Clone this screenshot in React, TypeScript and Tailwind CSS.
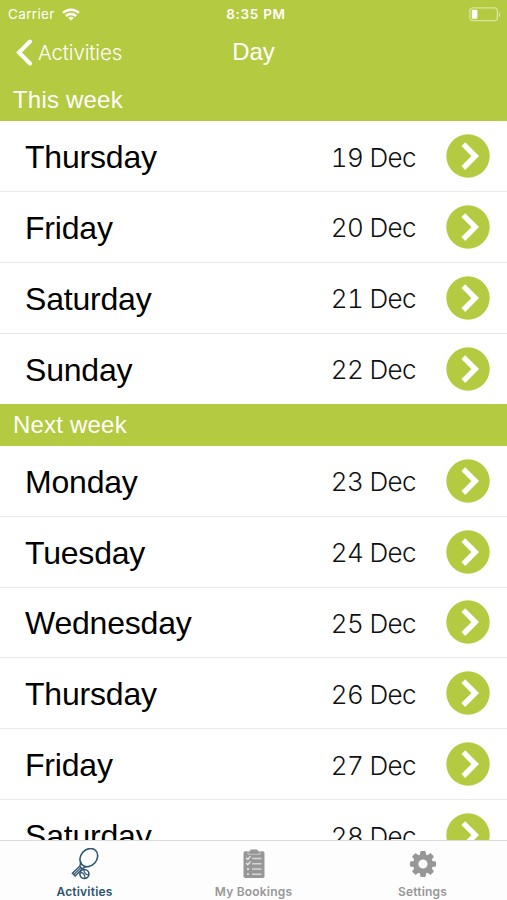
import React, { useState } from 'react'

interface Day {
  name: string
  date: string
}

interface Week {
  title: string
  days: Day[]
}

const weeks: Week[] = [
  {
    title: 'This week',
    days: [
      { name: 'Thursday', date: '19 Dec' },
      { name: 'Friday', date: '20 Dec' },
      { name: 'Saturday', date: '21 Dec' },
      { name: 'Sunday', date: '22 Dec' }
    ]
  },
  {
    title: 'Next week',
    days: [
      { name: 'Monday', date: '23 Dec' },
      { name: 'Tuesday', date: '24 Dec' },
      { name: 'Wednesday', date: '25 Dec' },
      { name: 'Thursday', date: '26 Dec' },
      { name: 'Friday', date: '27 Dec' },
      { name: 'Saturday', date: '28 Dec' }
    ]
  }
]

function WifiIcon() {
  return (
    <svg width="18" height="13" viewBox="0 0 18 13" fill="none" stroke="currentColor" strokeWidth="2.4">
      <path d="M1 4.9C5.5 0.6 12.5 0.6 17 4.9" />
      <path d="M3.9 8C6.8 5.3 11.2 5.3 14.1 8" />
      <path d="M9 12.6L6.2 9.9C7.8 8.5 10.2 8.5 11.8 9.9Z" fill="currentColor" stroke="none" />
    </svg>
  )
}

function BatteryIcon() {
  return (
    <svg width="32" height="15" viewBox="0 0 32 15" fill="none">
      <rect x="0.8" y="0.8" width="27.6" height="12.9" rx="3.2" stroke="white" strokeOpacity="0.5" strokeWidth="1.3" />
      <rect x="2.8" y="2.8" width="5.6" height="9" rx="1" fill="white" />
      <path d="M29.8 5C31.6 5.8 31.6 9.2 29.8 10Z" fill="white" fillOpacity="0.5" />
    </svg>
  )
}

function ArrowCircle() {
  return (
    <svg width="44" height="44" viewBox="0 0 44 44" fill="none">
      <circle cx="22" cy="22" r="21.7" fill="#b4ca40" />
      <path d="M17.3 10.2L29.2 22.1L17.3 34" stroke="white" strokeWidth="5.4" />
    </svg>
  )
}

function RacketIcon() {
  return (
    <svg width="28" height="32" viewBox="0 0 28 32" fill="none" stroke="currentColor">
      <ellipse cx="17.8" cy="9.6" rx="8" ry="9.9" transform="rotate(42 17.8 9.6)" strokeWidth="1.6" />
      <path d="M9.8 13.5L9 18L1.4 25.2L4.2 28L11.4 20.6L15.4 18.4" strokeWidth="1.4" />
      <path d="M8.6 18.2L11.2 20.8M9.8 19.6L3 26.4" strokeWidth="1.3" />
      <circle cx="13.4" cy="26" r="4.5" strokeWidth="1.6" />
      <path d="M9.6 24.6C12.4 24.6 13.8 26.400 14 30M12.8 21.8C13.100 24.800 14.600 26.600 17.600 27" strokeWidth="1.2" />
    </svg>
  )
}

function ClipboardIcon() {
  return (
    <svg width="22" height="30" viewBox="0 0 22 30" fill="none">
      <rect x="0.5" y="2.2" width="21" height="26.8" rx="1.8" fill="currentColor" />
      <path d="M5 2.2V5.2H17V2.2" stroke="#d8d8d8" strokeWidth="0.8" />
      <rect x="7.2" y="0.5" width="7.6" height="4" rx="0.8" fill="currentColor" />
      <path d="M9 9.5H18.5M9 14.7H18.5M9 20H18.5M9 25.2H18.5" stroke="#d6d6d6" strokeWidth="1.4" />
      <path d="M3.2 8.8L4.8 10.5L7.5 7.2M3.2 14L4.8 15.7L7.5 12.4" stroke="#ededed" strokeWidth="1.3" />
      <path d="M4 20H6M4 25.2H6" stroke="#dedede" strokeWidth="1.8" />
    </svg>
  )
}

function GearIcon() {
  const teeth = [0, 45, 90, 135, 180, 225, 270, 315]
  return (
    <svg width="28" height="28" viewBox="0 0 28 28" fill="currentColor">
      {teeth.map((angle) => (
        <path key={angle} d="M11.4 1.6Q11.5 0.9 12.2 0.9H15.8Q16.5 0.9 16.6 1.6L17.5 7H10.5Z" transform={`rotate(${angle} 14 14)`} />
      ))}
      <circle cx="14" cy="14" r="7.2" fill="none" stroke="currentColor" strokeWidth="5.2" />
    </svg>
  )
}

const tabs = [
  { label: 'Activities', icon: <RacketIcon /> },
  { label: 'My Bookings', icon: <ClipboardIcon /> },
  { label: 'Settings', icon: <GearIcon /> }
]

export default function App() {
  const [activeTab, setActiveTab] = useState('Activities')

  return (
    <div className="flex h-[900px] w-[507px] flex-col overflow-hidden bg-white font-['Liberation_Sans',sans-serif]">
      {/* Status bar and navigation */}
      <header className="h-[79.6px] shrink-0 bg-[#b4ca40] text-white">
        <div className="grid h-7 grid-cols-3 items-center pr-1.5 pl-2 font-['Inter',sans-serif]">
          <div className="flex items-center gap-[7px]">
            <span className="text-[13.5px] tracking-[0.35px]">Carrier</span>
            <WifiIcon />
          </div>
          <span className="pl-[3px] text-center text-[13.5px] font-semibold tracking-[0.7px]">8:35 PM</span>
          <div className="flex justify-end">
            <BatteryIcon />
          </div>
        </div>
        <div className="grid h-12 grid-cols-3 items-center px-4">
          <button className="flex items-center gap-[5px] text-left">
            <svg width="17" height="27" viewBox="0 0 17 27" fill="none">
              <path d="M14 2.5L3 13.5L14 24.5" stroke="white" strokeWidth="4" strokeLinecap="round" />
            </svg>
            <span className="pt-0.5 font-['Inter',sans-serif] text-[20.5px] font-light tracking-[-0.15px]">Activities</span>
          </button>
          <h1 className="text-center text-[24px]">Day</h1>
        </div>
      </header>

      {/* Days grouped by week */}
      <main className="min-h-0 flex-1 overflow-hidden">
        {weeks.map((week) => (
          <section key={week.title}>
            <h2 className="flex h-[41.6px] items-center bg-[#b4ca40] pl-[13px] text-[24px] tracking-[0.2px] text-white">
              {week.title}
            </h2>
            <ul className="divide-y divide-[#e9e9e9]">
              {week.days.map((day) => (
                <li key={day.date} className="flex h-[70.8px] items-center pr-[17px] pl-[25px]">
                  <span className="flex-1 pt-[2px] text-[32px] tracking-[-0.2px] text-black">{day.name}</span>
                  <span className="mr-[30px] pt-[2px] font-['Inter',sans-serif] text-[26px] font-light tracking-[-0.6px] text-[#111] tabular-nums">
                    {day.date}
                  </span>
                  <ArrowCircle />
                </li>
              ))}
            </ul>
          </section>
        ))}
      </main>

      {/* Tab bar */}
      <nav className="grid h-[60px] shrink-0 grid-cols-3 border-t border-[#dcdcdc] bg-[#fdfdfd] font-['Inter',sans-serif]">
        {tabs.map((tab) => (
          <button
            key={tab.label}
            onClick={() => setActiveTab(tab.label)}
            className={`flex flex-col items-center ${activeTab === tab.label ? 'text-[#2c5470]' : 'text-[#979797]'}`}
          >
            <span className="flex h-[43px] items-center pt-[2px]">{tab.icon}</span>
            <span className="text-[12px] leading-4 font-semibold tracking-[0.2px]">{tab.label}</span>
          </button>
        ))}
      </nav>
    </div>
  )
}
